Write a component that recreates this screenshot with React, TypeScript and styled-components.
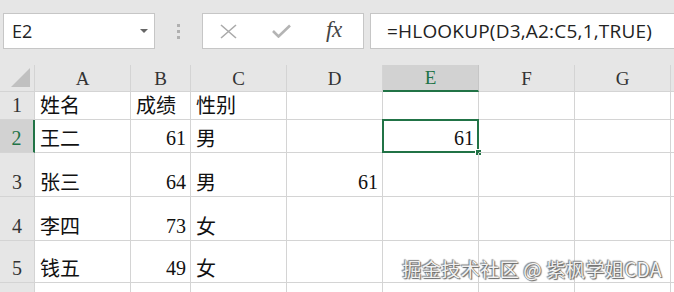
import React from "react";
import styled, { createGlobalStyle } from "styled-components";

const GREEN = "#217346";
const LINE = "#d4d4d4";

const Global = createGlobalStyle`
  html, body { margin: 0; padding: 0; }
  body {
    width: 674px; height: 292px; overflow: hidden;
    background: #e6e6e6;
    font-family: "Liberation Serif", "Noto Sans CJK SC", serif;
  }
`;

const Page = styled.div`
  position: relative;
  width: 674px;
  height: 292px;
  overflow: hidden;
  background: #e6e6e6;
`;

const Toolbar = styled.div`
  height: 65px;
  display: flex;
  align-items: flex-start;
  padding: 13px 0 0 3px;
  box-sizing: border-box;
`;

const NameBox = styled.div`
  width: 152px;
  height: 36px;
  box-sizing: border-box;
  background: #fff;
  border: 1px solid #c6c6c6;
  display: flex;
  align-items: center;
  justify-content: space-between;
  padding: 0 5px 0 8px;
  font-family: "Open Sans", "Noto Sans", sans-serif;
  font-size: 18px;
  color: #222;
`;

const Caret = styled.span`
  width: 0;
  height: 0;
  border-left: 4px solid transparent;
  border-right: 4px solid transparent;
  border-top: 4px solid #666;
  margin-right: 1px;
`;

const Dots = styled.div`
  width: 47px;
  height: 36px;
  display: flex;
  flex-direction: column;
  align-items: center;
  justify-content: center;
  gap: 3px;
  & > span {
    width: 3px;
    height: 3px;
    background: #b0b0b0;
  }
`;

const FxBox = styled.div`
  width: 162px;
  height: 36px;
  box-sizing: border-box;
  background: #fff;
  border: 1px solid #c6c6c6;
  display: flex;
  align-items: center;
  padding-left: 17px;
`;

const IconSlot = styled.div<{ $w: number }>`
  width: ${(p) => p.$w}px;
  display: flex;
  align-items: center;
`;

const Fx = styled.span`
  font-family: "Liberation Serif", serif;
  font-style: italic;
  font-size: 23px;
  color: #444;
  margin-top: -2px;
  letter-spacing: -0.5px;
`;

const Formula = styled.div`
  margin-left: 6px;
  flex: 1;
  height: 36px;
  box-sizing: border-box;
  background: #fff;
  border: 1px solid #c6c6c6;
  border-right: none;
  display: flex;
  align-items: center;
  padding-left: 16px;
  font-family: "Open Sans", "Noto Sans", sans-serif;
  font-size: 19px;
  letter-spacing: 0.2px;
  color: #222;
  white-space: nowrap;
`;

const Grid = styled.div`
  display: grid;
  grid-template-columns: 35px 96px 60px 96px 96px 96px 96px 96px 10px;
  grid-template-rows: 27px 28px 33px 44px 44px 42px 20px;
  background: #fff;
`;

const Corner = styled.div`
  background: #e6e6e6;
  border-right: 1px solid ${LINE};
  border-bottom: 1px solid ${LINE};
  box-sizing: border-box;
  position: relative;
  &::after {
    content: "";
    position: absolute;
    right: 4px;
    bottom: 4px;
    width: 0;
    height: 0;
    border-left: 19px solid transparent;
    border-bottom: 19px solid #c0c0c0;
  }
`;

const ColHead = styled.div<{ $sel?: boolean }>`
  background: ${(p) => (p.$sel ? "#d2d2d2" : "#e6e6e6")};
  color: ${(p) => (p.$sel ? GREEN : "#333")};
  border-right: 1px solid ${(p) => (p.$sel ? "#c6c6c6" : LINE)};
  border-bottom: ${(p) => (p.$sel ? `2px solid ${GREEN}` : `1px solid ${LINE}`)};
  box-sizing: border-box;
  display: flex;
  align-items: center;
  justify-content: center;
  font-family: "Liberation Serif", serif;
  font-size: 19px;
  padding-top: 1px;
`;

const RowHead = styled.div<{ $sel?: boolean }>`
  background: ${(p) => (p.$sel ? "#d2d2d2" : "#e6e6e6")};
  color: ${(p) => (p.$sel ? GREEN : "#333")};
  border-right: ${(p) => (p.$sel ? `2px solid ${GREEN}` : `1px solid ${LINE}`)};
  border-bottom: 1px solid ${LINE};
  box-sizing: border-box;
  display: flex;
  align-items: flex-end;
  justify-content: center;
  padding-bottom: 2px;
  font-family: "Liberation Serif", serif;
  font-size: 20px;
  line-height: 24px;
`;

const Cell = styled.div<{ $num?: boolean; $sel?: boolean }>`
  position: relative;
  border-right: 1px solid ${LINE};
  border-bottom: 1px solid ${LINE};
  box-sizing: border-box;
  display: flex;
  align-items: flex-end;
  justify-content: ${(p) => (p.$num ? "flex-end" : "flex-start")};
  padding: 0 4px 2px 5px;
  font-family: ${(p) =>
    p.$num ? `"Liberation Serif", serif` : `"Noto Sans CJK SC", sans-serif`};
  font-size: 20px;
  line-height: 24px;
  color: #111;
  white-space: nowrap;
  ${(p) =>
    p.$sel &&
    `
    &::before {
      content: "";
      position: absolute;
      left: -1px; top: -1px; right: -1px; bottom: -1px;
      border: 2px solid ${GREEN};
      pointer-events: none;
    }
    &::after {
      content: "";
      position: absolute;
      right: -4px; bottom: -4px;
      width: 5px; height: 5px;
      background: ${GREEN};
      border: 1px solid #fff;
    }
  `}
`;

const Watermark = styled.div`
  position: absolute;
  left: 402px;
  top: 254px;
  font-family: "Noto Sans CJK SC", "Noto Sans", sans-serif;
  font-size: 19.5px;
  color: #f2f2f2;
  text-shadow: 0 0 1px #555, 1px 1px 1px #666, -1px -1px 1px #888;
  white-space: nowrap;
`;

type Row = { n: number; cells: (string | number)[] };

const rows: Row[] = [
  { n: 1, cells: ["姓名", "成绩", "性别", "", "", "", "", ""] },
  { n: 2, cells: ["王二", 61, "男", "", 61, "", "", ""] },
  { n: 3, cells: ["张三", 64, "男", 61, "", "", "", ""] },
  { n: 4, cells: ["李四", 73, "女", "", "", "", "", ""] },
  { n: 5, cells: ["钱五", 49, "女", "", "", "", "", ""] },
  { n: 6, cells: ["", "", "", "", "", "", "", ""] },
];

const cols = ["A", "B", "C", "D", "E", "F", "G", ""];

export default function App() {
  return (
    <Page>
      <Global />
      <Toolbar>
        <NameBox>
          E2
          <Caret />
        </NameBox>
        <Dots>
          <span />
          <span />
          <span />
        </Dots>
        <FxBox>
          <IconSlot $w={52}>
            <svg width="17" height="15" viewBox="0 0 17 15">
              <path d="M1 1 L16 14 M16 1 L1 14" stroke="#aaa" strokeWidth="1.6" fill="none" />
            </svg>
          </IconSlot>
          <IconSlot $w={54}>
            <svg width="19" height="14" viewBox="0 0 19 14">
              <path d="M1 7 L6.5 12.5 L18 1.5" stroke="#b4b4b4" strokeWidth="2.6" fill="none" />
            </svg>
          </IconSlot>
          <IconSlot $w={30}>
            <Fx>fx</Fx>
          </IconSlot>
        </FxBox>
        <Formula>=HLOOKUP(D3,A2:C5,1,TRUE)</Formula>
      </Toolbar>
      <Grid>
        <Corner />
        {cols.map((c, i) => (
          <ColHead key={i} $sel={c === "E"}>
            {c}
          </ColHead>
        ))}
        {rows.map((r) => (
          <React.Fragment key={r.n}>
            <RowHead $sel={r.n === 2}>{r.n <= 5 ? r.n : ""}</RowHead>
            {r.cells.map((v, i) => (
              <Cell key={i} $num={typeof v === "number"} $sel={r.n === 2 && i === 4}>
                {v}
              </Cell>
            ))}
          </React.Fragment>
        ))}
      </Grid>
      <Watermark>掘金技术社区 @ 紫枫学姐CDA</Watermark>
    </Page>
  );
}
